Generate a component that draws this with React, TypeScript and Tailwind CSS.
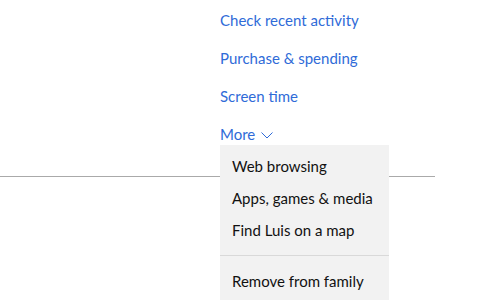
export default function App() {
  const links = ["Check recent activity", "Purchase & spending", "Screen time"]
  const menu = ["Web browsing", "Apps, games & media", "Find Luis on a map"]

  return (
    <div className="relative w-[500px] h-[300px] overflow-hidden bg-white font-['Lato',sans-serif]">
      <div className="flex flex-col pt-[1px] pl-[220px]">
        {links.map((l) => (
          <a key={l} className="h-[38px] flex items-center whitespace-nowrap text-[15px] text-[#2f6bd8]">
            {l}
          </a>
        ))}
        <a className="h-[38px] flex items-center gap-[6px] text-[15px] text-[#2f6bd8]">
          More
          <svg width="12" height="7" viewBox="0 0 12 7" className="mt-[3px]">
            <polyline points="0.5,0.5 6,6 11.5,0.5" fill="none" stroke="#2f6bd8" strokeWidth="1" />
          </svg>
        </a>
      </div>
      <div className="mt-[23px] w-[435px] border-t border-[#aaaaaa]" />

      {/* menu déroulant */}
      <div className="absolute left-[220px] top-[145px] w-[169px] bg-[#f2f2f2] pt-[5px] pb-[10px]">
        {menu.map((m) => (
          <div key={m} className="h-[32px] flex items-center whitespace-nowrap px-[12px] text-[15px] text-[#111]">
            {m}
          </div>
        ))}
        <div className="my-[9px] border-t border-[#d9d9d9]" />
        <div className="h-[32px] flex items-center whitespace-nowrap px-[12px] text-[15px] text-[#111]">
          Remove from family
        </div>
      </div>
    </div>
  )
}
